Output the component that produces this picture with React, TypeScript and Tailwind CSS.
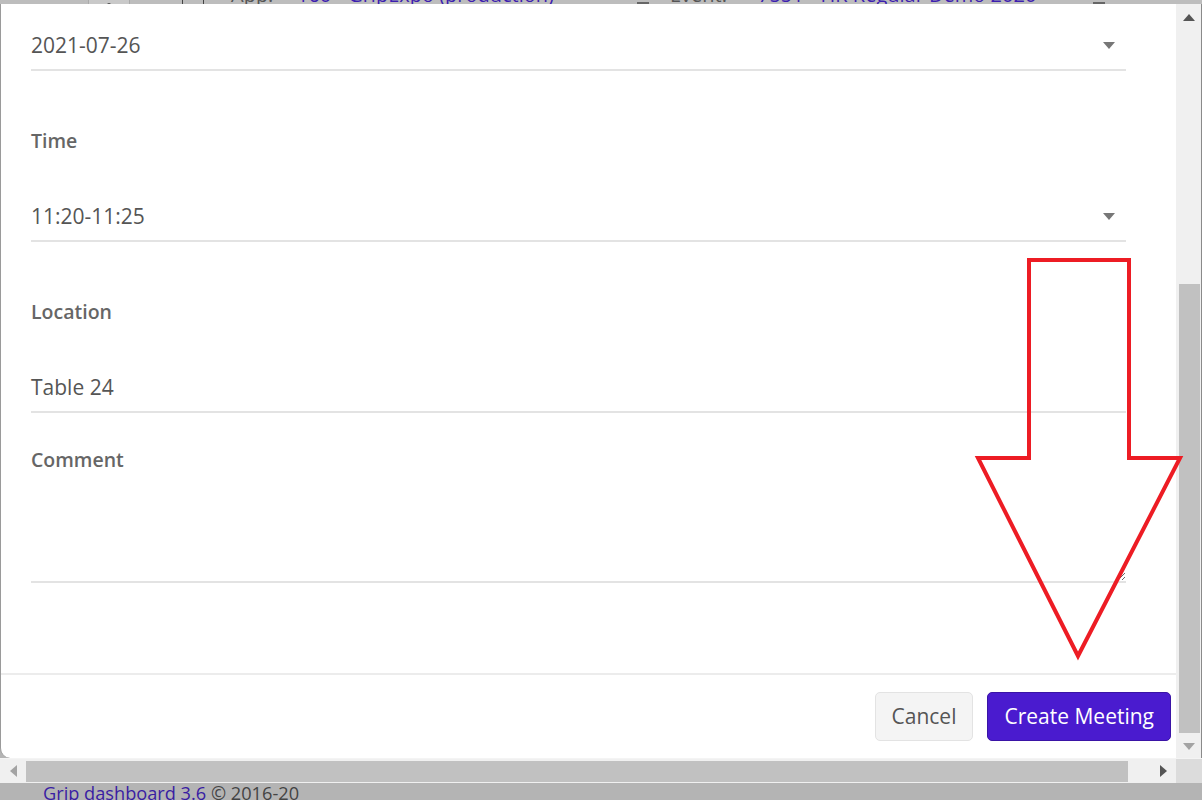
import React from 'react'

// Small filled triangle used by the select boxes and scrollbars
function Caret({ dir = 'down', color = '#777', size = 6 }: { dir?: 'up' | 'down' | 'left' | 'right'; color?: string; size?: number }) {
  const pts =
    dir === 'down'
      ? '0,0 12,0 6,7'
      : dir === 'up'
      ? '0,7 12,7 6,0'
      : dir === 'left'
      ? '7,0 7,12 0,6'
      : '0,0 0,12 7,6'
  const w = dir === 'down' || dir === 'up' ? 12 : 7
  const h = dir === 'down' || dir === 'up' ? 7 : 12
  return (
    <svg width={(w * size) / 6} height={(h * size) / 6} viewBox={`0 0 ${w} ${h}`} className="block">
      <polygon points={pts} fill={color} />
    </svg>
  )
}

function SelectField({ value }: { value: string }) {
  return (
    <div className="h-[49px] flex items-center justify-between border-b-2 border-[#e3e3e3] pr-[11px]">
      <span className="text-[21px] text-[#555] pt-[1px]">{value}</span>
      <Caret />
    </div>
  )
}

function Label({ children, top = 56, bottom = 38 }: { children: React.ReactNode; top?: number; bottom?: number }) {
  return (
    <div
      className={`text-[19.5px] font-semibold leading-[28px] text-[#666] ${top === 56 ? 'pt-[56px]' : 'pt-[33px]'} ${bottom === 38 ? 'pb-[38px]' : 'pb-[9px]'}`}
    >
      {children}
    </div>
  )
}

export default function App() {
  return (
    <div
      className="relative w-[1202px] h-[800px] overflow-hidden bg-[#b4b4b4]"
      style={{ fontFamily: '"Open Sans", "Liberation Sans", sans-serif' }}
    >
      {/* Page header behind the modal, only its lowest pixels show */}
      <div className="h-[4px] overflow-hidden bg-[#bdbdbd]">
        <div className="flex items-start -mt-[15px] leading-[20px] text-[20px] whitespace-nowrap">
          <div className="w-[88px]" />
          <div className="w-[42px] h-[24px] bg-[#c9c9c9] border-x border-[#aaa] flex items-end justify-center">
            <span className="w-[4px] h-[4px] rounded-full bg-[#555] mb-[2px]" />
          </div>
          <div className="w-[52px]" />
          <div className="w-px h-[24px] bg-[#444]" />
          <div className="w-[20px]" />
          <div className="w-px h-[24px] bg-[#444]" />
          <div className="w-[27px]" />
          <span className="text-[#555] w-[66px]">App:</span>
          <span className="text-[#3d1fb0] w-[340px]">160 - GripExpo (production)</span>
          <div className="w-[12px] h-[20px] border-b-[3px] border-[#666]" />
          <div className="w-[21px]" />
          <span className="text-[#555] w-[88px]">Event:</span>
          <span className="text-[#3d1fb0] w-[335px]">7551 - HR Regular Demo 2020</span>
          <div className="w-[12px] h-[20px] border-b-[3px] border-[#666]" />
        </div>
      </div>

      <div className="flex h-[754px]">
        {/* Modal */}
        <div className="flex-1 flex flex-col bg-white border-l border-[#9a9a9a] rounded-bl-[10px]">
          <div className="pl-[30px] pr-[50px] pt-[18px] pb-[90px]">
            <SelectField value="2021-07-26" />
            <Label>Time</Label>
            <SelectField value="11:20-11:25" />
            <Label>Location</Label>
            <div className="h-[49px] flex items-center border-b-2 border-[#e3e3e3]">
              <span className="text-[21px] text-[#555]">Table 24</span>
            </div>
            <Label top={33} bottom={9}>Comment</Label>
            <textarea
              className="block w-full h-[100px] border-0 border-b-2 border-[#e3e3e3] outline-none resize-y text-[21px] text-[#555]"
              defaultValue=""
            />
          </div>
          <div className="h-[2px] bg-[#ececec]" />
          <div className="h-[83px] flex justify-end items-start gap-[14px] pt-[17px] pr-[5px]">
            <button className="h-[49px] px-[16px] rounded-[5px] bg-[#f4f4f4] border border-[#e3e3e3] text-[21px] text-[#555]">
              Cancel
            </button>
            <button className="h-[49px] px-[16px] rounded-[5px] bg-[#4a1bcf] border border-[#3a14a6] text-[21px] text-white">
              Create Meeting
            </button>
          </div>
        </div>

        {/* Vertical scrollbar */}
        <div className="w-[25px] bg-[#f0f0f0] flex flex-col items-center pt-[10px]">
          <Caret dir="up" color="#555" />
          <div className="mt-[263px] w-[21px] h-[449px] bg-[#c1c1c1] ml-[2px]" />
          <div className="mt-[10px]">
            <Caret dir="down" color="#a3a3a3" />
          </div>
        </div>
        <div className="w-px bg-[#8a8a8a]" />
      </div>

      {/* Horizontal scrollbar */}
      <div className="flex h-[25px] border-t border-[#f4f4f4]">
        <div className="w-[1176px] bg-[#f0f0f0] flex items-center">
          <div className="w-[26px] flex justify-center">
            <Caret dir="left" color="#a3a3a3" />
          </div>
          <div className="w-[1102px] h-[21px] bg-[#c1c1c1]" />
          <div className="flex-1" />
          <div className="w-[26px] flex justify-center">
            <Caret dir="right" color="#555" />
          </div>
        </div>
        <div className="flex-1 bg-[#dcdcdc]" />
      </div>

      {/* Page footer */}
      <div className="pl-[43px] pt-[2px] text-[18.2px] leading-[16px] whitespace-nowrap">
        <span className="text-[#3a1ea3]">Grip dashboard 3.6</span>
        <span className="text-[#444]"> © 2016-20</span>
      </div>

      {/* Red annotation arrow drawn over the screenshot */}
      <svg className="absolute left-0 top-0 pointer-events-none" width="1202" height="800">
        <polygon
          points="1029,260 1129,260 1129,458 1180,458 1078,656 978,458 1029,458"
          fill="none"
          stroke="#ed1c24"
          strokeWidth="4"
          strokeLinejoin="miter"
        />
      </svg>
    </div>
  )
}
